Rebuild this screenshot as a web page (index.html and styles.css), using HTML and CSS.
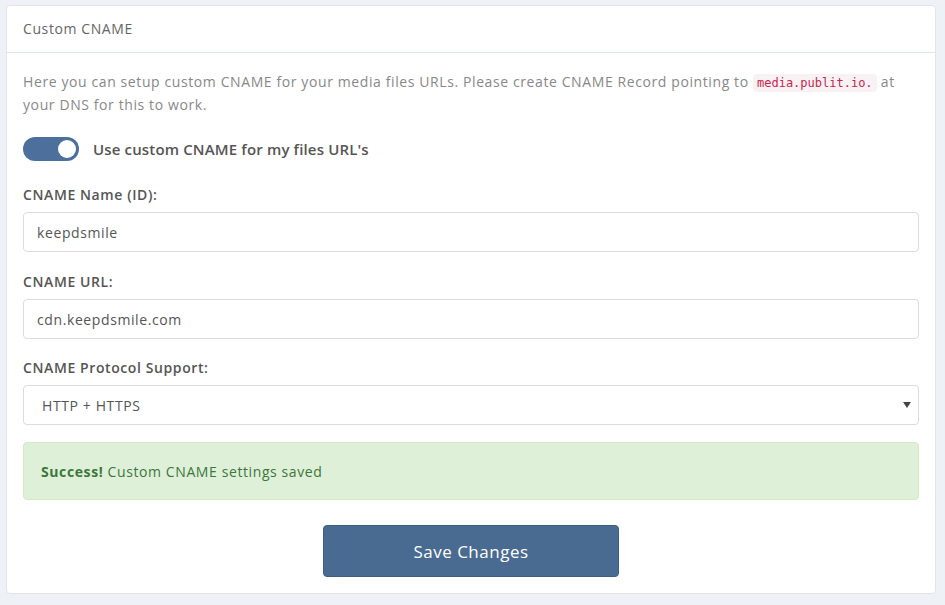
FILE: index.html
```html
<!DOCTYPE html>
<html>
<head>
  <title>Custom CNAME</title>
  <link rel="stylesheet" href="styles.css">
</head>
<body>
  <div class="panel">
    <div class="panel-heading">Custom CNAME</div>
    <div class="panel-body">
      <p class="intro">Here you can setup custom CNAME for your media files URLs. Please create CNAME Record pointing to <code>media.publit.io.</code> at your DNS for this to work.</p>
      <label class="switch-row">
        <span class="switch"><span class="knob"></span></span>
        <span class="switch-text">Use custom CNAME for my files URL's</span>
      </label>
      <div class="form-group">
        <label class="control-label" for="cnameId">CNAME Name (ID):</label>
        <input class="form-control" type="text" id="cnameId" value="keepdsmile">
      </div>
      <div class="form-group tight">
        <label class="control-label" for="cnameUrl">CNAME URL:</label>
        <input class="form-control" type="text" id="cnameUrl" value="cdn.keepdsmile.com">
      </div>
      <div class="form-group last">
        <label class="control-label" for="cnameProto">CNAME Protocol Support:</label>
        <div class="select-wrap">
          <select class="form-control" id="cnameProto">
            <option>HTTP + HTTPS</option>
            <option>HTTP</option>
            <option>HTTPS</option>
          </select>
        </div>
      </div>
      <div class="alert-success"><strong>Success!</strong> Custom CNAME settings saved</div>
      <div class="actions">
        <button class="btn-save">Save Changes</button>
      </div>
    </div>
  </div>
</body>
</html>
```

FILE: styles.css
```css
body {
  margin: 0;
  padding: 5px 9px 11px 6px;
  background-color: #eef1f5;
  font-family: "Open Sans", Lato, sans-serif;
  font-size: 14px;
  letter-spacing: 0.6px;
  color: #777777;
}

.panel {
  background-color: #ffffff;
  border: 1px solid #e1e5ea;
  border-radius: 4px;
}

.panel-heading {
  height: 46px;
  line-height: 46px;
  padding: 0 16px;
  border-bottom: 1px solid #dfe4e8;
  color: #666666;
  font-size: 14px;
}

.panel-body {
  padding: 18px 16px 16px 16px;
}

.intro {
  margin: 0;
  line-height: 22px;
  color: #888888;
}

.intro code {
  font-family: "DejaVu Sans Mono", monospace;
  font-size: 12px;
  letter-spacing: 0;
  color: #c7254e;
  background-color: #f9f2f4;
  padding: 2px 4px;
  border-radius: 4px;
}

.switch-row {
  display: flex;
  align-items: center;
  gap: 14px;
  margin-top: 21px;
  margin-bottom: 24px;
}

.switch {
  display: flex;
  justify-content: flex-end;
  align-items: center;
  width: 56px;
  height: 24px;
  padding: 0 3px;
  box-sizing: border-box;
  border-radius: 12px;
  background-color: #4d6f9b;
}

.knob {
  width: 18px;
  height: 18px;
  border-radius: 50%;
  background-color: #ffffff;
}

.switch-text {
  font-size: 15px;
  font-weight: 600;
  letter-spacing: 0.15px;
  color: #555555;
}

.form-group {
  margin-bottom: 20px;
}

.form-group.tight {
  margin-bottom: 19px;
}

.form-group.last {
  margin-bottom: 17px;
}

.control-label {
  display: block;
  line-height: 20px;
  margin-bottom: 7px;
  font-weight: 600;
  color: #555555;
}

.form-control {
  display: block;
  width: 100%;
  height: 40px;
  box-sizing: border-box;
  padding: 0 13px;
  border: 1px solid #dcdcdc;
  border-radius: 4px;
  background-color: #ffffff;
  font-family: "Open Sans", Lato, sans-serif;
  font-size: 14px;
  letter-spacing: 0.6px;
  color: #555555;
}

.select-wrap {
  position: relative;
}

.select-wrap select {
  appearance: none;
  -webkit-appearance: none;
  padding-left: 18px;
}

.select-wrap::after {
  content: "";
  position: absolute;
  right: 8px;
  top: 17px;
  border-left: 4px solid transparent;
  border-right: 4px solid transparent;
  border-top: 6px solid #444444;
}

.alert-success {
  height: 58px;
  line-height: 58px;
  box-sizing: border-box;
  padding: 0 17px;
  margin-bottom: 25px;
  border: 1px solid #d6e9c6;
  border-radius: 4px;
  background-color: #dff0d8;
  color: #3c763d;
}

.actions {
  display: flex;
  justify-content: center;
}

.btn-save {
  width: 296px;
  height: 52px;
  border: 1px solid #3f5d80;
  border-radius: 4px;
  background-color: #4a6b91;
  color: #ffffff;
  font-family: "Open Sans", Lato, sans-serif;
  font-size: 17px;
  letter-spacing: 0.5px;
  cursor: pointer;
}
```
